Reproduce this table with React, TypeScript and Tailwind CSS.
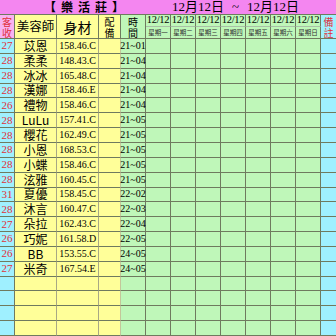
import React from "react";

const people = [
  ["27", "苡恩", "158.46.C", "21~01"],
  ["28", "柔柔", "148.43.C", "21~04"],
  ["28", "冰冰", "165.48.C", "21~04"],
  ["28", "漢娜", "158.46.E", "21~04"],
  ["26", "禮物", "158.46.C", "21~04"],
  ["28", "LuLu", "157.41.C", "21~05"],
  ["28", "櫻花", "162.49.C", "21~05"],
  ["28", "小恩", "168.53.C", "21~05"],
  ["28", "小蝶", "158.46.C", "21~05"],
  ["28", "泫雅", "160.45.C", "21~05"],
  ["31", "夏優", "158.45.C", "22~02"],
  ["28", "沐言", "160.47.C", "22~03"],
  ["27", "朵拉", "162.43.C", "22~04"],
  ["26", "巧妮", "161.58.D", "22~05"],
  ["26", "BB", "153.55.C", "24~05"],
  ["27", "米奇", "167.54.E", "24~05"],
];

const rows = [...people, ...Array.from({ length: 4 }, () => ["", "", "", ""])];
const days = ["星期一", "星期二", "星期三", "星期四", "星期五", "星期六", "星期日"];

const serif = "font-['Liberation_Serif','Noto_Sans_CJK_TC',serif]";
const cjk = "font-['Noto_Sans_CJK_TC','Liberation_Serif',sans-serif]";
const cell = "flex items-center justify-center border-r border-b border-[#6f7a5f] leading-none";

function Stack({ a, b }: { a: string; b: string }) {
  return (
    <>
      <span className="leading-[11px]">{a}</span>
      <span className="leading-[11px]">{b}</span>
    </>
  );
}

export default function App() {
  return (
    <div className="h-[336px] w-[336px] overflow-hidden bg-white text-black">
      <div className="grid h-[336px] grid-cols-[15px_42px_42px_22px_25px_repeat(7,25px)_15px] grid-rows-[15px_12px_12px_repeat(20,1fr)]">
        {/* title bar */}
        <div className="col-span-13 flex items-center border-b border-[#6f7a5f] bg-[#f486f0]">
          <div className={`flex w-[168px] items-center justify-center gap-[5px] text-[12px] font-bold leading-[14px] ${cjk}`}>
            <span>【</span>
            <span>樂</span>
            <span>活</span>
            <span>莊</span>
            <span>】</span>
          </div>
          <div className={`flex items-center pl-[4px] text-[13px] leading-[14px] ${serif}`}>
            <span>12月12日</span>
            <span className="px-[8px]">~</span>
            <span>12月12日</span>
          </div>
        </div>

        {/* header */}
        <div className={`${cell} row-span-2 flex-col bg-[#f7b3f2] text-[10px] text-[#e0303a] ${cjk}`}>
          <Stack a="客" b="收" />
        </div>
        <div className={`${cell} row-span-2 bg-[#ffff99] text-[12.5px] ${cjk}`}>美容師</div>
        <div className={`${cell} row-span-2 bg-[#ffff99] text-[14px] ${cjk}`}>身材</div>
        <div className={`${cell} row-span-2 flex-col bg-[#ffff99] text-[10px] ${cjk}`}>
          <Stack a="配" b="備" />
        </div>
        <div className={`${cell} row-span-2 flex-col bg-[#bff7b9] text-[10px] ${cjk}`}>
          <Stack a="時" b="間" />
        </div>
        {days.map((d) => (
          <div key={d} className={`${cell} border-b-[#a9bfa6] bg-[#bff7b9] text-[10.5px] tracking-[-0.3px] ${serif}`}>
            12/12
          </div>
        ))}
        <div className={`row-span-2 flex flex-col items-center justify-center border-b border-[#6f7a5f] bg-[#9ff0ff] text-[10px] text-[#e0303a] ${cjk}`}>
          <Stack a="備" b="註" />
        </div>
        {days.map((d) => (
          <div key={d + "n"} className={`${cell} bg-[#bff7b9] text-[6.5px] text-[#333] ${cjk}`}>
            {d}
          </div>
        ))}

        {/* body */}
        {rows.map((r, i) => (
          <React.Fragment key={i}>
            <div className={`${cell} bg-[#9ff0ff] text-[11px] text-[#e0303a] ${serif}`}>{r[0]}</div>
            <div className={`${cell} border-r-[#a8a884] bg-[#ffff99] text-[12px] ${cjk}`}>{r[1]}</div>
            <div className={`${cell} border-r-[#a8a884] bg-[#ffff99] text-[10px] ${serif}`}>{r[2]}</div>
            <div className={`${cell} border-r-[#c4c69a] bg-[#ffff99]`} />
            <div className={`${cell} bg-[#bff7b9] text-[10px] ${serif}`}>{r[3]}</div>
            {days.map((d) => (
              <div key={d} className={`${cell} border-[#4f684d] bg-[#bff7b9]`} />
            ))}
            <div className="border-b border-[#6f7a5f] bg-[#9ff0ff]" />
          </React.Fragment>
        ))}
      </div>
    </div>
  );
}
